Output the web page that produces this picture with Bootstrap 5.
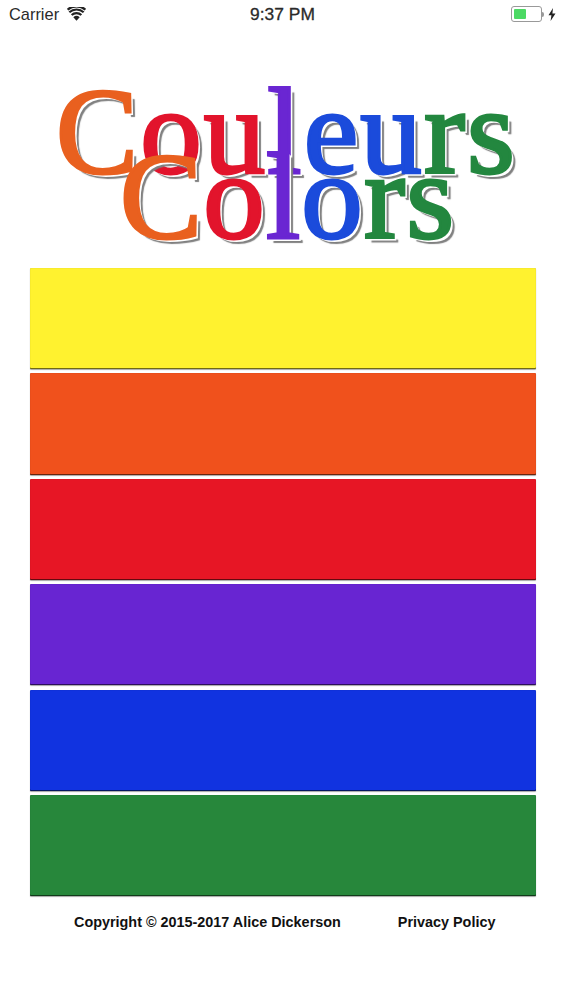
<!DOCTYPE html>
<html lang="fr">
<head>
<meta charset="utf-8">
<title>Couleurs Colors</title>
<link rel="stylesheet" href="https://cdn.jsdelivr.net/npm/bootstrap@5.3.0/dist/css/bootstrap.min.css">
<style>
html,body{background:#fff;height:1000px;overflow:hidden}
body{font-family:"Liberation Sans",Arial,sans-serif;color:#111}
.status-bar{height:28px;padding:0 7px 0 9px;font-size:16.4px;color:#2a2a2a}
.status-side{width:150px}
.status-time{font-size:17.4px;-webkit-text-stroke:.3px #2a2a2a}
.batt{width:31px;height:16px;border:1px solid #999;border-radius:3px;padding:2px}
.batt-fill{width:12px;height:100%;background:#4cd964;border-radius:1px}
.batt-nub{width:2px;height:5px;background:#999;border-radius:0 2px 2px 0}
.logo-box{position:relative;height:240px;font-family:"Liberation Serif","Times New Roman",serif;line-height:1}
.logo-line{position:absolute;white-space:nowrap;font-size:123px;-webkit-text-stroke:3px currentColor;text-shadow:2px 2px 0 #fff,3px 3px 0 #fff,5px 5px 1px #808080}
.line-fr{left:56px;top:42px;letter-spacing:2.1px}
.line-en{left:120px;top:107px;letter-spacing:1.2px}
.c-o{color:#e9601f}.c-r{color:#e2142c}.c-p{color:#6a26d2}.c-b{color:#1b4bdb}.c-g{color:#23873f}
.bars{margin:0 27px 0 30px;gap:4.1px}
.bar-item{height:101.3px;border-radius:1px;box-shadow:inset 0 -1px 0 rgba(0,0,0,.55),0 1px 1px rgba(0,0,0,.35),inset 0 0 1px rgba(0,0,0,.3)}
.bg-y{background:#fff22f}.bg-o{background:#f0511c}.bg-r{background:#e71625}.bg-p{background:#6825d2}.bg-b{background:#1133e0}.bg-g{background:#27873b}
.foot{margin-top:16px;padding-left:74px;font-size:14.4px;font-weight:700;line-height:20px}
.foot a{margin-left:57px;color:inherit;text-decoration:none}
</style>
</head>
<body>
<div class="status-bar d-flex align-items-center justify-content-between">
  <div class="status-side d-flex align-items-center gap-2">
    <span>Carrier</span>
    <svg width="19" height="14" viewBox="0 0 18 13" aria-hidden="true"><path d="M9 13 6 9.6a4.4 4.4 0 0 1 6 0Z" fill="#222"/><path d="M4.4 8a6.8 6.8 0 0 1 9.2 0M2.2 5.5a10 10 0 0 1 13.6 0M.6 3a12.6 12.6 0 0 1 16.8 0" transform="translate(0 -.6)" fill="none" stroke="#222" stroke-width="2.1"/></svg>
  </div>
  <div class="status-time">9:37 PM</div>
  <div class="status-side d-flex align-items-center justify-content-end">
    <div class="batt"><div class="batt-fill"></div></div>
    <div class="batt-nub me-1"></div>
    <svg width="8" height="13" viewBox="0 0 8 13" aria-hidden="true"><path d="M5 0 .5 7.2h2.9L2.6 13l4.9-7.6H4.4Z" fill="#222"/></svg>
  </div>
</div>
<div class="logo-box">
  <div class="logo-line line-fr"><span class="c-o">C</span><span class="c-r">ou</span><span class="c-p">l</span><span class="c-b">eu</span><span class="c-g">rs</span></div>
  <div class="logo-line line-en"><span class="c-o">C</span><span class="c-r">o</span><span class="c-p">l</span><span class="c-b">o</span><span class="c-g">rs</span></div>
</div>
<div class="bars d-flex flex-column">
  <div class="bar-item bg-y"></div>
  <div class="bar-item bg-o"></div>
  <div class="bar-item bg-r"></div>
  <div class="bar-item bg-p"></div>
  <div class="bar-item bg-b"></div>
  <div class="bar-item bg-g"></div>
</div>
<div class="foot d-flex"><span>Copyright © 2015-2017 Alice Dickerson</span><a href="#">Privacy Policy</a></div>
<script src="https://cdn.jsdelivr.net/npm/bootstrap@5.3.0/dist/js/bootstrap.bundle.min.js"></script>
</body>
</html>
